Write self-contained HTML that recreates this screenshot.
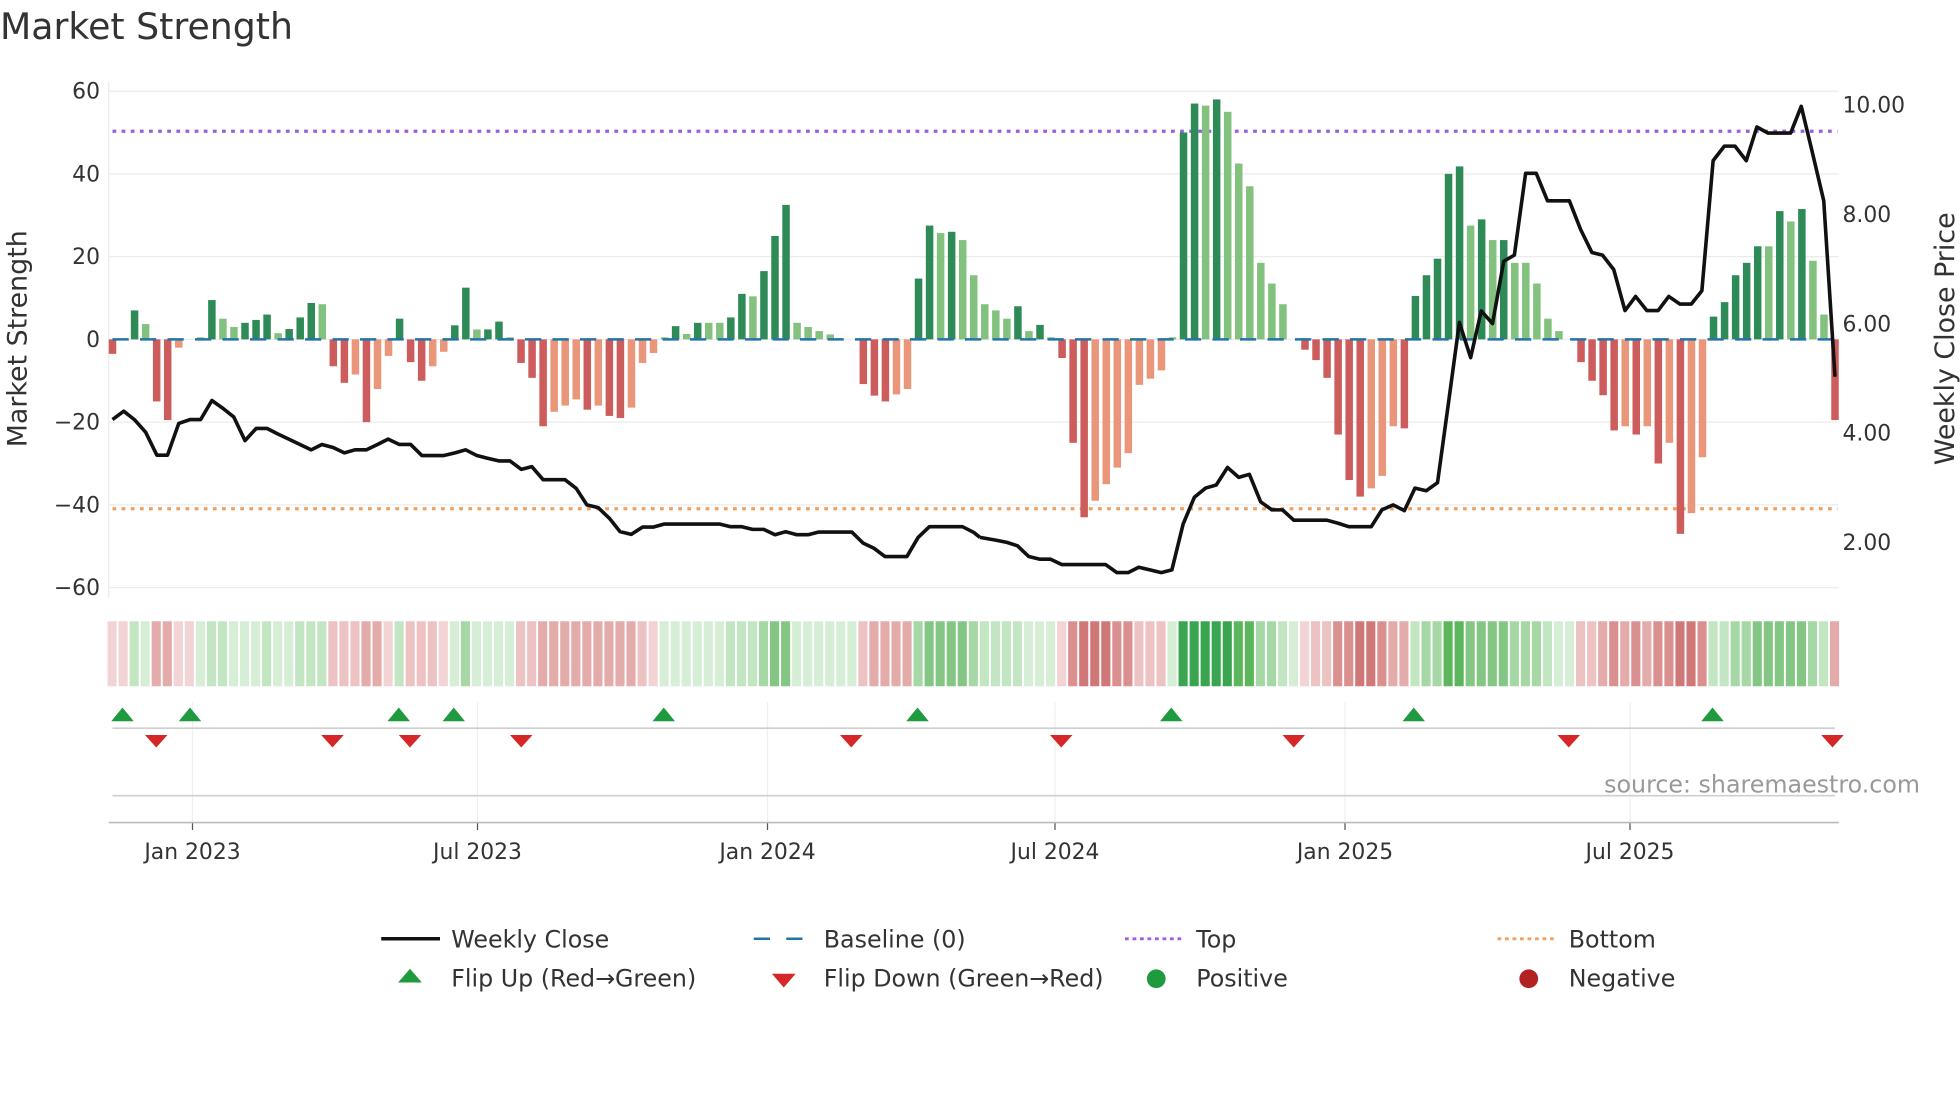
<!DOCTYPE html>
<html><head><meta charset="utf-8">
<style>
html,body{margin:0;padding:0;background:#fff;}
svg{display:block;}
text{font-family:"DejaVu Sans","Liberation Sans",sans-serif;fill:#333;}
</style></head>
<body>
<svg id="s" width="1960" height="1102" viewBox="0 0 1568 881.6" xmlns="http://www.w3.org/2000/svg">
<rect width="1568" height="882" fill="#fff"/>
<text x="0" y="31" font-size="29">Market Strength</text>
<g id="grid" stroke="#ececec" stroke-width="1"></g>
<g id="ticks" font-size="17.5"></g>
<text transform="translate(21,271) rotate(-90)" font-size="21.5" text-anchor="middle">Market Strength</text>
<text transform="translate(1563,271) rotate(-90)" font-size="21.5" text-anchor="middle">Weekly Close Price</text>
<line x1="90" y1="105" x2="1470" y2="105" stroke="#9b5fe0" stroke-width="2.6" stroke-dasharray="3 4.3"/>
<line x1="90" y1="407" x2="1470" y2="407" stroke="#f0a060" stroke-width="2.6" stroke-dasharray="3 4.3"/>
<g id="bars"></g>
<line x1="90" y1="271.5" x2="1470" y2="271.5" stroke="#2474a8" stroke-width="2" stroke-dasharray="13 9"/>
<polyline transform="scale(0.5,0.306)" vector-effect="non-scaling-stroke" fill="none" stroke="#111" stroke-width="3.6" stroke-linejoin="round" points="180,1097 198,1075 215,1097 233,1130 251,1190 268,1190 286,1107 304,1097 321,1097 339,1047 357,1068 374,1090 392,1152 410,1120 427,1120 445,1135 462,1148 480,1162 498,1176 515,1162 533,1170 551,1184 568,1176 586,1176 604,1162 621,1148 639,1162 657,1162 675,1191 692,1191 710,1191 728,1184 745,1176 763,1191 780,1198 798,1205 816,1205 834,1227 851,1220 869,1254 886,1254 904,1254 922,1277 939,1320 957,1327 975,1355 992,1390 1010,1397 1028,1378 1045,1378 1063,1370 1080,1370 1098,1370 1116,1370 1134,1370 1151,1370 1169,1377 1187,1377 1204,1384 1222,1384 1240,1398 1257,1390 1275,1398 1293,1398 1310,1391 1328,1391 1346,1391 1363,1391 1381,1420 1398,1433 1416,1455 1434,1455 1451,1455 1469,1405 1487,1377 1505,1377 1522,1377 1540,1377 1558,1392 1568,1405"/>
<polyline transform="translate(784,0) scale(0.5,0.306)" vector-effect="non-scaling-stroke" fill="none" stroke="#111" stroke-width="3.6" stroke-linejoin="round" points="0,1405 25,1412 43,1418 60,1427 78,1455 96,1462 113,1462 131,1476 148,1476 166,1476 184,1476 201,1476 219,1497 237,1497 254,1483 272,1490 290,1497 307,1490 325,1370 343,1300 361,1276 378,1268 396,1222 414,1248 431,1240 449,1312 467,1333 484,1333 502,1360 520,1360 537,1360 555,1360 573,1368 590,1377 608,1377 626,1377 643,1333 661,1320 679,1335 696,1276 714,1283 732,1262 749,1060 767,843 785,935 802,813 820,846 838,683 855,667 873,453 890,453 908,525 926,525 943,525 961,600 979,660 996,667 1014,705 1032,812 1049,775 1067,812 1085,812 1102,775 1120,795 1138,795 1155,760 1173,420 1191,382 1208,382 1226,420 1243,332 1261,348 1279,348 1297,348 1314,278 1332,400 1350,525 1368,985"/>
<g id="heat"></g>
<g id="lower"></g>
<text x="1536" y="634" font-size="19" style="fill:#999" text-anchor="end">source: sharemaestro.com</text>
<g font-size="19">
<line x1="305" y1="751" x2="352" y2="751" stroke="#111" stroke-width="2.8"/>
<text x="361" y="758">Weekly Close</text>
<line x1="603" y1="751" x2="649" y2="751" stroke="#2474a8" stroke-width="2" stroke-dasharray="13 13"/>
<text x="659" y="758">Baseline (0)</text>
<line x1="900" y1="751" x2="946" y2="751" stroke="#9b5fe0" stroke-width="2.3" stroke-dasharray="3 3"/>
<text x="957" y="758">Top</text>
<line x1="1198" y1="751" x2="1244" y2="751" stroke="#f0a060" stroke-width="2.3" stroke-dasharray="3 3"/>
<text x="1255" y="758">Bottom</text>
<polygon points="328,775 337.5,786 318.5,786" fill="#1f9a3f"/>
<text x="361" y="789">Flip Up (Red→Green)</text>
<polygon points="617.5,779 636.5,779 627,790" fill="#d62728"/>
<text x="659" y="789">Flip Down (Green→Red)</text>
<circle cx="925" cy="783" r="7.5" fill="#1f9a3f"/>
<text x="957" y="789">Positive</text>
<circle cx="1223" cy="783" r="7.5" fill="#b22222"/>
<text x="1255" y="789">Negative</text>
</g>
</svg>
<script>
(function(){
var NS="http://www.w3.org/2000/svg";
function el(t,a,p){var e=document.createElementNS(NS,t);for(var k in a)e.setAttribute(k,a[k]);p.appendChild(e);return e;}
var g=document.getElementById('grid'),tk=document.getElementById('ticks');
var lv=[60,40,20,0,-20,-40,-60];
lv.forEach(function(v){var y=271.5-v*3.31;el('line',{x1:87,x2:1471,y1:y,y2:y},g);
 var t=el('text',{x:80,y:y+6,'text-anchor':'end'},tk);t.textContent=(v<0?'\u2212'+(-v):v);});
el('line',{x1:87,x2:87,y1:65,y2:478},g);
[10,8,6,4,2].forEach(function(p){var y=84+(10-p)*43.75;var t=el('text',{x:1474,y:y+6},tk);t.textContent=p.toFixed(2);});
var d="r3.5,z,d7,l3.7,r15,r19.5,s2,z,l0.5,d9.5,l5,l3,d4,d4.7,d6,l1.5,d2.5,d5.3,d8.8,l8.5,r6.5,r10.5,s8.5,r20,s12,s4,d5,r5.5,r10,s6.5,s3,d3.4,d12.5,l2.4,d2.4,d4.3,l0.5,r5.7,r9.3,r21,s17.5,s16,s14.5,r17,s16,r18.5,r19,s16.5,s5.7,s3.3,l0.5,d3.2,l1.3,d4,l4,l4,d5.3,d11,l10.4,d16.5,d25,d32.5,l4,l3,l2,l1.2,z,z,r10.8,r13.6,r15,s13.3,s12,d14.7,d27.5,l25.7,d26,l24,l15.5,l8.5,l7,l5,d8,l2,d3.5,l0.5,r4.5,r25,r43,s39,s35,s31,s27.5,s11,s9.5,s7.5,l0.5,d50,d57,l56.5,d58,l55,l42.5,l37,l18.5,l13.5,l8.5,z,r2.5,r5,r9.3,r23,r34,r38,s36,s33,s21,r21.5,d10.5,d15.5,d19.5,d40,d41.8,l27.5,d29,l24,d24,l18.5,l18.5,l13.5,l5,l2,z,r5.5,r10,r13.5,r22,s21,r23,s21,r30,s25,r47,s42,s28.5,d5.5,d9,d15.5,d18.5,d22.5,l22.5,d31,l28.5,d31.5,l19,l6,r19.5".split(',');
var col={d:'#2e8b57',l:'#82c27e',r:'#cd5c5c',s:'#e9967a'};
var bars=document.getElementById('bars'),heat=document.getElementById('heat');
var n=d.length,step=(1468-90)/(n-1),prevSign=-1;
var pos=['#d6eed6','#c2e5c2','#a6d8a6','#84c784','#5cb65c','#3aa550'];
var neg=['#f2d4d4','#ecc2c2','#e4abab','#db9090','#d07878','#c66262'];
function lvl(a){return a<5?0:a<12?1:a<22?2:a<35?3:a<50?4:5;}
for(var i=0;i<n;i++){
 var c=d[i][0],v=c=='z'?0:parseFloat(d[i].slice(1)),x=90+i*step;
 var sign=(c=='d'||c=='l')?1:(c=='z'?prevSign:-1);prevSign=sign;
 if(c!='z'){var h=v*3.31;
  if(sign>0)el('rect',{x:x-3,y:271.5-h,width:6,height:h,fill:col[c]},bars);
  else el('rect',{x:x-3,y:271.5,width:6,height:h,fill:col[c]},bars);}
 el('rect',{x:x-4,y:497,width:7.3,height:52,fill:(sign>0?pos:neg)[lvl(v)]},heat);
}
var lo=document.getElementById('lower');
var dates=[[154,'Jan 2023'],[382,'Jul 2023'],[614,'Jan 2024'],[844,'Jul 2024'],[1076,'Jan 2025'],[1304,'Jul 2025']];
dates.forEach(function(p){el('line',{x1:p[0],x2:p[0],y1:562,y2:658,stroke:'#efefef'},lo);
 el('line',{x1:p[0],x2:p[0],y1:658,y2:664,stroke:'#555'},lo);
 var t=el('text',{x:p[0],y:687,'text-anchor':'middle','font-size':17.5},lo);t.textContent=p[1];});
el('line',{x1:90,x2:1468,y1:582.5,y2:582.5,stroke:'#cfcfcf','stroke-width':1.3},lo);
el('line',{x1:90,x2:1468,y1:636.5,y2:636.5,stroke:'#cfcfcf','stroke-width':1.3},lo);
el('line',{x1:87,x2:1471,y1:658,y2:658,stroke:'#bbb','stroke-width':1.3},lo);
[98,152,319,363,531,734,937,1131,1370].forEach(function(x){el('polygon',{points:(x)+',566 '+(x+9)+',577 '+(x-9)+',577',fill:'#1f9a3f'},lo);});
[125,266,328,417,681,849,1035,1255,1466].forEach(function(x){el('polygon',{points:(x-9)+',588 '+(x+9)+',588 '+x+',598',fill:'#d62728'},lo);});
})();
</script>
</body></html>
